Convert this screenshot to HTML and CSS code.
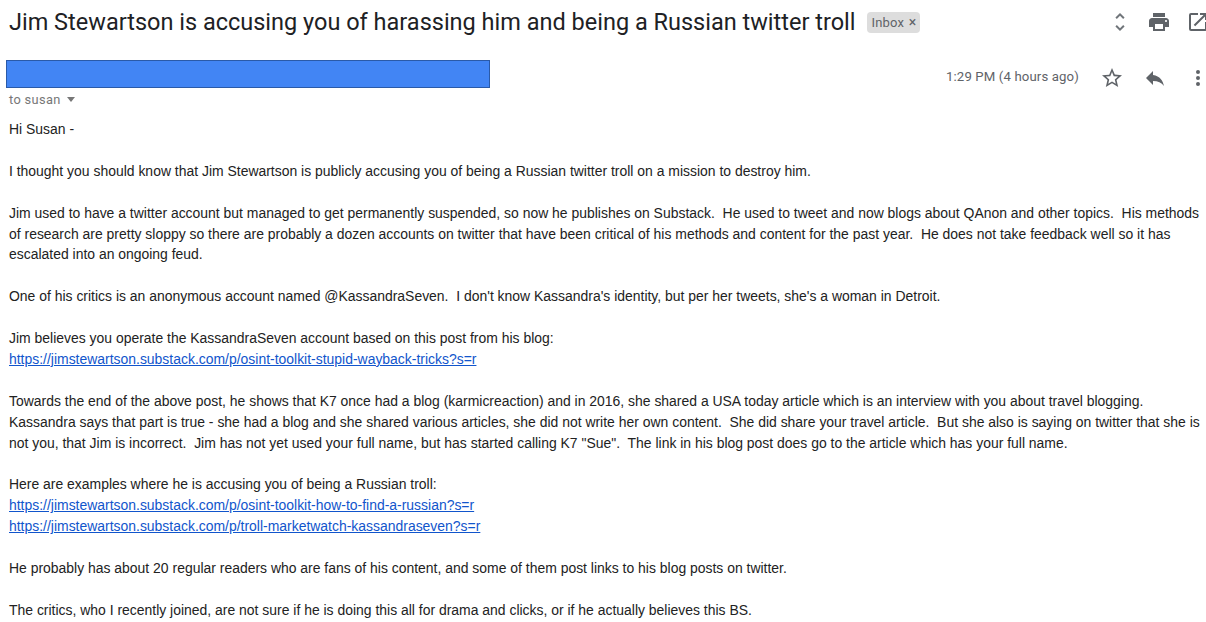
FILE: index.html
```html
<!DOCTYPE html>
<html lang="en">
<head>
<meta charset="utf-8">
<title>Jim Stewartson email</title>
<link rel="stylesheet" href="styles.css">
</head>
<body>
<header class="subject-row">
  <div class="subject-left">
    <h1 class="subject">Jim Stewartson is accusing you of harassing him and being a Russian twitter troll</h1>
    <span class="chip">Inbox <span class="chip-x">×</span></span>
  </div>
  <div class="subject-icons">
    <svg class="icon" viewBox="0 0 24 24"><path d="M12 5.83 15.17 9l1.41-1.41L12 3 7.41 7.59 8.83 9 12 5.83zm0 12.34L8.83 15l-1.41 1.41L12 21l4.59-4.59L15.17 15 12 18.17z"/></svg>
    <svg class="icon" viewBox="0 0 24 24"><path d="M19 8H5c-1.66 0-3 1.34-3 3v6h4v4h12v-4h4v-6c0-1.66-1.34-3-3-3zm-3 11H8v-5h8v5zm3-7c-.55 0-1-.45-1-1s.45-1 1-1 1 .45 1 1-.45 1-1 1zm-1-9H6v4h12V3z"/></svg>
    <svg class="icon" viewBox="0 0 24 24"><path d="M19 19H5V5h7V3H5a2 2 0 0 0-2 2v14a2 2 0 0 0 2 2h14c1.1 0 2-.9 2-2v-7h-2v7zM14 3v2h3.59l-9.83 9.83 1.41 1.41L19 6.41V10h2V3h-7z"/></svg>
  </div>
</header>
<section class="sender-row">
  <div class="sender-left">
    <div class="redaction"></div>
    <div class="to">to susan <span class="caret"></span></div>
  </div>
  <div class="sender-right">
    <span class="time">1:29 PM (4 hours ago)</span>
    <svg class="icon action" viewBox="0 0 24 24"><path d="M22 9.24l-7.19-.62L12 2 9.19 8.63 2 9.24l5.46 4.73L5.82 21 12 17.27 18.18 21l-1.63-7.03L22 9.24zM12 15.4l-3.76 2.27 1-4.28-3.32-2.88 4.38-.38L12 6.1l1.71 4.04 4.38.38-3.32 2.88 1 4.28L12 15.4z"/></svg>
    <svg class="icon action" viewBox="0 0 24 24"><path d="M10 9V5l-7 7 7 7v-4.1c5 0 8.5 1.6 11 5.1-1-5-4-10-11-11z"/></svg>
    <svg class="icon action last" viewBox="0 0 24 24"><path d="M12 8a2 2 0 1 0 0-4 2 2 0 0 0 0 4zm0 2a2 2 0 1 0 0 4 2 2 0 0 0 0-4zm0 6a2 2 0 1 0 0 4 2 2 0 0 0 0-4z"/></svg>
  </div>
</section>
<main class="body">
<p>Hi Susan -</p>
<p>I thought you should know that Jim Stewartson is publicly accusing you of being a Russian twitter troll on a mission to destroy him.</p>
<p>Jim used to have a twitter account but managed to get permanently suspended, so now he publishes on Substack.  He used to tweet and now blogs about QAnon and other topics.  His methods
of research are pretty sloppy so there are probably a dozen accounts on twitter that have been critical of his methods and content for the past year.  He does not take feedback well so it has
escalated into an ongoing feud.</p>
<p>One of his critics is an anonymous account named @KassandraSeven.  I don't know Kassandra's identity, but per her tweets, she's a woman in Detroit.</p>
<p>Jim believes you operate the KassandraSeven account based on this post from his blog:
<a href="#">https://jimstewartson.substack.com/p/osint-toolkit-stupid-wayback-tricks?s=r</a></p>
<p>Towards the end of the above post, he shows that K7 once had a blog (karmicreaction) and in 2016, she shared a USA today article which is an interview with you about travel blogging.
Kassandra says that part is true - she had a blog and she shared various articles, she did not write her own content.  She did share your travel article.  But she also is saying on twitter that she is
not you, that Jim is incorrect.  Jim has not yet used your full name, but has started calling K7 "Sue".  The link in his blog post does go to the article which has your full name.</p>
<p>Here are examples where he is accusing you of being a Russian troll:
<a href="#">https://jimstewartson.substack.com/p/osint-toolkit-how-to-find-a-russian?s=r</a>
<a href="#">https://jimstewartson.substack.com/p/troll-marketwatch-kassandraseven?s=r</a></p>
<p>He probably has about 20 regular readers who are fans of his content, and some of them post links to his blog posts on twitter.</p>
<p>The critics, who I recently joined, are not sure if he is doing this all for drama and clicks, or if he actually believes this BS.</p>
</main>
</body>
</html>
```
FILE: styles.css
```css
html, body { margin: 0; padding: 0; background: #fff; overflow: hidden; }
body { width: 1206px; height: 622px; font-family: "Liberation Sans", Arial, sans-serif; color: #222; }
.subject-row { display: flex; justify-content: space-between; align-items: center; height: 44px; padding: 0 0 0 9px; }
.subject-left { display: flex; align-items: center; gap: 12px; }
.subject { margin: 0; font: 400 23.5px/32px Roboto, sans-serif; color: #202124; white-space: nowrap; }
.chip { background: #ddd; color: #5f6368; border-radius: 4px; font: 400 13px/20px Roboto, sans-serif; padding: 0 4px; letter-spacing: .2px; }
.chip-x { font-size: 14px; margin-left: 1px; }
.subject-icons { display: flex; gap: 15px; margin-right: -4px; }
.icon { width: 24px; height: 24px; fill: #5f6368; display: block; }
.subject-icons .icon:first-child { fill: #70757a; }
.sender-row { display: flex; justify-content: space-between; padding-top: 16px; height: 62px; box-sizing: border-box; }
.sender-left { display: flex; flex-direction: column; padding-left: 6px; }
.redaction { width: 482px; height: 26px; background: #4285f4; border: 1px solid #2a5aa8; flex: none; }
.to { font: 400 12.8px/16px Roboto, sans-serif; color: #777; padding: 3px 0 0 3px; letter-spacing: .35px; position: relative; top: 1px; flex: none; }
.caret { display: inline-block; width: 0; height: 0; border: 4.5px solid transparent; border-top: 5px solid #777; border-bottom: 0; margin-left: 3px; vertical-align: 2px; }
.sender-right { display: flex; align-items: flex-start; padding-top: 6px; margin-right: -4px; }
.time { font: 400 13.2px/20px Roboto, sans-serif; color: #5f6368; margin-top: 1px; letter-spacing: .13px; margin-right: 21px; }
.action { margin-right: 19px; }
.action.last { margin-right: 0; }
.body { padding: 13px 0 0 9px; font-size: 13.94px; line-height: 20.9px; color: #222; }
.body p { margin: 0 0 20.9px; white-space: pre; }
.body a { color: #15c; text-decoration: underline; }
```
